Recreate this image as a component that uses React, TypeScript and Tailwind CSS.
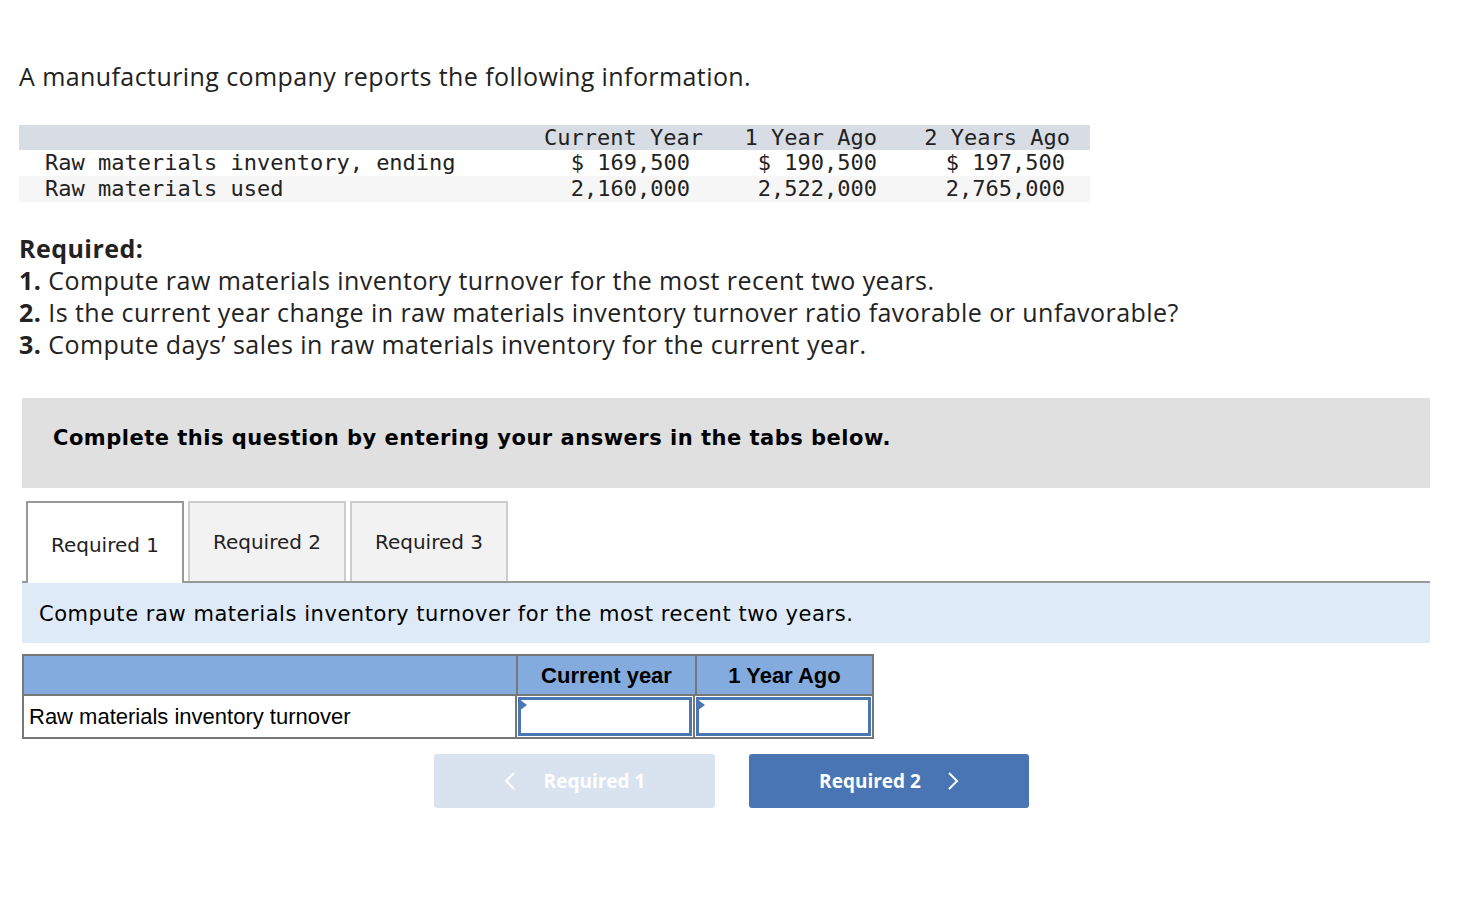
import React from 'react'

const sans = 'font-["Open_Sans","Lato",sans-serif]'
const mono = 'font-["DejaVu_Sans_Mono","Liberation_Mono",monospace]'
const verdana = 'font-["DejaVu_Sans","Liberation_Sans",sans-serif]'
const arial = 'font-["Liberation_Sans",Arial,sans-serif]'

const rows = [
  { label: 'Raw materials inventory, ending', values: ['$ 169,500', '$ 190,500', '$ 197,500'], bg: 'bg-white' },
  { label: 'Raw materials used', values: ['2,160,000', '2,522,000', '2,765,000'], bg: 'bg-[#f6f6f6]' },
]

function DataTable() {
  return (
    <div className={`${mono} ml-[19px] w-[1071px] text-[22px] leading-[26px] text-[#222] mt-[31px]`}>
      <div className="flex h-[25px] bg-[#d8dce4] items-center">
        <div className="w-[511px]" />
        <div className="w-[185px] text-right pr-[12px]">Current Year</div>
        <div className="w-[175px] text-right pr-[13px]">1 Year Ago</div>
        <div className="w-[200px] text-right pr-[20px]">2 Years Ago</div>
      </div>
      {rows.map(r => (
        <div key={r.label} className={`flex h-[26px] items-center ${r.bg}`}>
          <div className="w-[511px] pl-[26px] whitespace-pre">{r.label}</div>
          <div className="w-[185px] text-right pr-[25px]">{r.values[0]}</div>
          <div className="w-[175px] text-right pr-[13px]">{r.values[1]}</div>
          <div className="w-[200px] text-right pr-[25px]">{r.values[2]}</div>
        </div>
      ))}
    </div>
  )
}

function Required() {
  return (
    <div className={`${sans} ml-[19px] mt-[30px] text-[25px] tracking-[0.45px] leading-[32px] text-[#222]`}>
      <div className="font-bold">Required:</div>
      <div><span className="font-bold">1.</span> Compute raw materials inventory turnover for the most recent two years.</div>
      <div><span className="font-bold">2.</span> Is the current year change in raw materials inventory turnover ratio favorable or unfavorable?</div>
      <div><span className="font-bold">3.</span> Compute days’ sales in raw materials inventory for the current year.</div>
    </div>
  )
}

function Tabs() {
  const tabs = ['Required 1', 'Required 2', 'Required 3']
  return (
    <div className="flex items-end pl-[4px] border-b-2 border-[#999] h-[82px] mt-[13px]">
      {tabs.map((t, i) => (
        <div
          key={t}
          className={`${verdana} text-[20px] w-[158px] flex items-center justify-center mr-[4px] ${
            i === 0
              ? 'h-[82px] bg-white border-2 border-b-0 border-[#999] -mb-[2px] pt-[4px]'
              : 'h-[80px] bg-[#f2f2f2] border-2 border-b-0 border-[#ccc]'
          }`}
        >
          {t}
        </div>
      ))}
    </div>
  )
}

function InputCell() {
  return (
    <div className="relative w-[179px] h-[41px] border-l-2 border-[#777] bg-white">
      <div className="absolute inset-[1px] border-[3px] border-[#4a76b4]" />
      <svg className="absolute left-[2px] top-[3px]" width="8" height="12" viewBox="0 0 8 12">
        <path d="M0 0 L8 6 L0 12 Z" fill="#4a76b4" />
      </svg>
    </div>
  )
}

export default function App() {
  return (
    <div className="bg-white w-[1484px] h-[906px] pt-[58px] text-[#222]">
      <div className={`${sans} ml-[19px] text-[25px] tracking-[0.42px] leading-[36px]`}>
        A manufacturing company reports the following information.
      </div>
      <DataTable />
      <Required />

      <div className="ml-[22px] w-[1408px] mt-[38px]">
        <div className="h-[90px] bg-[#e0e0e0] pl-[31px] pt-[25px]">
          <span className={`${verdana} font-bold text-[21px] tracking-[0.5px] text-black`}>
            Complete this question by entering your answers in the tabs below.
          </span>
        </div>
        <Tabs />
        <div className={`${verdana} h-[60px] bg-[#deeaf7] flex items-center pl-[17px] pt-[3px] text-[21px] tracking-[0.55px] text-black`}>
          Compute raw materials inventory turnover for the most recent two years.
        </div>

        <div className={`${arial} mt-[11px] w-[852px] border-2 border-[#777] text-[22px] text-black`}>
          <div className="flex h-[40px] bg-[#84abdd] border-b-2 border-[#777]">
            <div className="w-[492px]" />
            <div className="w-[179px] border-l-2 border-[#777] flex items-center justify-center font-bold">
              Current year
            </div>
            <div className="w-[177px] border-l-2 border-[#777] flex items-center justify-center font-bold">
              1 Year Ago
            </div>
          </div>
          <div className="flex h-[41px]">
            <div className="w-[492px] flex items-center pl-[5px]">Raw materials inventory turnover</div>
            <InputCell />
            <InputCell />
          </div>
        </div>

        <div className="flex mt-[15px] ml-[412px] gap-[34px]">
          <button className={`${sans} w-[281px] h-[54px] rounded-[3px] bg-[#d9e3f0] text-white font-bold text-[19px] flex items-center justify-center gap-[28px]`}>
            <svg width="12" height="20" viewBox="0 0 12 20" fill="none" stroke="white" strokeWidth="2">
              <path d="M10 2 L2 10 L10 18" />
            </svg>
            Required 1
          </button>
          <button className={`${sans} w-[280px] h-[54px] rounded-[3px] bg-[#4a75b4] text-white font-bold text-[19px] flex items-center justify-center gap-[26px]`}>
            Required 2
            <svg width="12" height="20" viewBox="0 0 12 20" fill="none" stroke="white" strokeWidth="2">
              <path d="M2 2 L10 10 L2 18" />
            </svg>
          </button>
        </div>
      </div>
    </div>
  )
}
